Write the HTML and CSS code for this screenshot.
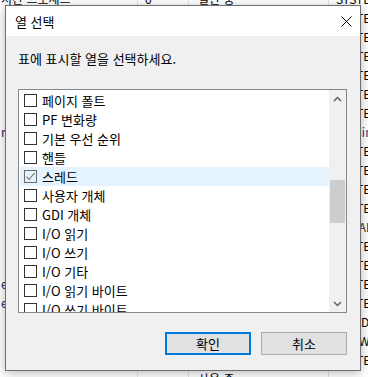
FILE: index.html
```html
<!DOCTYPE html>
<html lang="ko">
	<head>
		<meta charset="utf-8">
		<title>열 선택</title>
		<link rel="stylesheet" href="styles.css">
	</head>
	<body>
		<div class="table">
			<div class="row"><span class="c1">시간 프로세스</span><span class="c2">0</span><span class="c3">일반 중</span><span class="c4">SYSTEM</span></div>
			<div class="row"><span class="c1"></span><span class="c2"></span><span class="c3"></span><span class="c4">SYSTEM</span></div>
			<div class="row"><span class="c1"></span><span class="c2"></span><span class="c3"></span><span class="c4">SYSTEM</span></div>
			<div class="row"><span class="c1"></span><span class="c2"></span><span class="c3"></span><span class="c4">SYSTEM</span></div>
			<div class="row"><span class="c1"></span><span class="c2"></span><span class="c3"></span><span class="c4">SYSTEM</span></div>
			<div class="row"><span class="c1"></span><span class="c2"></span><span class="c3"></span><span class="c4">SYSTEM</span></div>
			<div class="row"><span class="c1"></span><span class="c2"></span><span class="c3"></span><span class="c4">SYSTEM</span></div>
			<div class="row"><span class="c1 lead">ra</span><span class="c2"></span><span class="c3"></span><span class="c4 user">Admin</span></div>
			<div class="row"><span class="c1"></span><span class="c2"></span><span class="c3"></span><span class="c4">SYSTEM</span></div>
			<div class="row"><span class="c1"></span><span class="c2"></span><span class="c3"></span><span class="c4">SYSTEM</span></div>
			<div class="row"><span class="c1"></span><span class="c2"></span><span class="c3"></span><span class="c4">SYSTEM</span></div>
			<div class="row"><span class="c1"></span><span class="c2"></span><span class="c3"></span><span class="c4">SYSTEM</span></div>
			<div class="row"><span class="c1"></span><span class="c2"></span><span class="c3"></span><span class="c4 svc">LOCAL SERVICE</span></div>
			<div class="row"><span class="c1"></span><span class="c2"></span><span class="c3"></span><span class="c4">SYSTEM</span></div>
			<div class="row"><span class="c1"></span><span class="c2"></span><span class="c3"></span><span class="c4">SYSTEM</span></div>
			<div class="row"><span class="c1 lead">e</span><span class="c2"></span><span class="c3"></span><span class="c4">SYSTEM</span></div>
			<div class="row"><span class="c1 lead">e:</span><span class="c2"></span><span class="c3"></span><span class="c4">SYSTEM</span></div>
			<div class="row"><span class="c1"></span><span class="c2"></span><span class="c3"></span><span class="c4">UMFD-0</span></div>
			<div class="row"><span class="c1"></span><span class="c2"></span><span class="c3"></span><span class="c4">NETWORK SERVICE</span></div>
			<div class="row"><span class="c1"></span><span class="c2"></span><span class="c3"></span><span class="c4">SYSTEM</span></div>
			<div class="row"><span class="c1"></span><span class="c2"></span><span class="c3">사용 중</span><span class="c4"></span></div>
		</div>

		<div class="dialog">
			<div class="titlebar">
				<span class="title">열 선택</span>
				<svg class="close" width="11" height="11" viewBox="0 0 11 11">
					<path d="M0.5 0.5 L10.5 10.5 M10.5 0.5 L0.5 10.5" stroke="#000" stroke-width="1" fill="none"/>
				</svg>
			</div>
			<div class="body">
				<p class="prompt">표에 표시할 열을 선택하세요.</p>
				<div class="listbox">
					<div class="items">
						<div class="item"><span class="box"></span>페이지 폴트</div>
						<div class="item"><span class="box"></span>PF 변화량</div>
						<div class="item"><span class="box"></span>기본 우선 순위</div>
						<div class="item"><span class="box"></span>핸들</div>
						<div class="item sel"><span class="box">
							<svg width="11" height="11" viewBox="0 0 11 11"><path d="M1.5 5.5 L4 8.5 L9.5 2" stroke="#6a6a6a" stroke-width="1.1" fill="none"/></svg>
						</span>스레드</div>
						<div class="item"><span class="box"></span>사용자 개체</div>
						<div class="item"><span class="box"></span>GDI 개체</div>
						<div class="item"><span class="box"></span>I/O 읽기</div>
						<div class="item"><span class="box"></span>I/O 쓰기</div>
						<div class="item"><span class="box"></span>I/O 기타</div>
						<div class="item"><span class="box"></span>I/O 읽기 바이트</div>
						<div class="item"><span class="box"></span>I/O 쓰기 바이트</div>
					</div>
					<div class="scrollbar">
						<div class="arrow">
							<svg width="9" height="6" viewBox="0 0 9 6"><path d="M1 5 L4.5 1.5 L8 5" stroke="#606060" stroke-width="1.5" fill="none"/></svg>
						</div>
						<div class="track"><div class="thumb"></div></div>
						<div class="arrow">
							<svg width="9" height="6" viewBox="0 0 9 6"><path d="M1 1 L4.5 4.5 L8 1" stroke="#606060" stroke-width="1.5" fill="none"/></svg>
						</div>
					</div>
				</div>
				<div class="buttons">
					<button class="btn default">확인</button>
					<button class="btn">취소</button>
				</div>
			</div>
		</div>
	</body>
</html>
```
FILE: styles.css
```css
html, body {
	margin: 0;
}
body {
	width: 368px;
	height: 377px;
	overflow: hidden;
	background: #fff;
	font-family: "Noto Sans CJK KR", "Noto Sans", sans-serif;
	font-size: 13px;
	color: #000;
}

/* task list behind the dialog */
.table {
	margin-top: -11px;
	font-size: 12px;
}
.row {
	display: grid;
	grid-template-columns: 137px 51px 140px 1fr;
	height: 19px;
	line-height: 19px;
	white-space: nowrap;
}
.row span {
	overflow: hidden;
}
.c1 {
	padding-left: 1px;
}
.c2 {
	border-left: 1px solid #e5e5e5;
	padding-left: 7px;
}
.c3 {
	border-left: 1px solid #e5e5e5;
	padding-left: 9px;
}
.c4 {
	border-left: 1px solid #e5e5e5;
	padding-left: 7px;
}
.lead {
	color: #1a2a6a;
}
.user {
	color: #3a2a7a;
}
.svc {
	color: #4a2a1a;
}

/* dialog */
.dialog {
	position: absolute;
	top: 5px;
	left: 5px;
	width: 354px;
	height: 364px;
	border: 1px solid #6e6e6e;
	background: #f0f0f0;
	box-shadow: 0 2px 10px rgba(0, 0, 0, 0.28);
	display: flex;
	flex-direction: column;
}
.titlebar {
	height: 30px;
	flex: none;
	background: #fff;
	display: flex;
	align-items: center;
	justify-content: space-between;
	padding: 0 8px 0 9px;
}
.title {
	line-height: 17px;
	margin-top: 1px;
}
.close {
	display: block;
}
.body {
	padding: 14px 13px 0 12px;
}
.prompt {
	margin: 0;
	line-height: 17px;
}

.listbox {
	margin-top: 22px;
	height: 222px;
	border: 1px solid #828790;
	background: #fff;
	display: flex;
}
.items {
	flex: 1;
	overflow: hidden;
	padding: 1px 0 0 1px;
}
.item {
	height: 19px;
	display: flex;
	align-items: center;
	gap: 5px;
	padding-left: 4px;
	white-space: nowrap;
}
.item.sel {
	background: #e5f3ff;
}
.box {
	width: 11px;
	height: 11px;
	flex: none;
	border: 1px solid #333;
	background: #fff;
	display: flex;
}
.sel .box {
	background: transparent;
	border-color: #6a6a6a;
}

.scrollbar {
	width: 17px;
	flex: none;
	background: #f0f0f0;
	display: flex;
	flex-direction: column;
}
.arrow {
	height: 17px;
	display: flex;
	align-items: center;
	justify-content: center;
}
.track {
	flex: 1;
}
.thumb {
	margin: 73px 1px 0;
	height: 43px;
	background: #cdcdcd;
}

.buttons {
	margin-top: 19px;
	display: flex;
	justify-content: flex-end;
	gap: 10px;
}
.btn {
	width: 86px;
	height: 23px;
	box-sizing: border-box;
	padding: 0;
	background: #e1e1e1;
	border: 1px solid #adadad;
	font-family: inherit;
	font-size: 13px;
	color: #000;
}
.btn.default {
	border: 2px solid #0078d7;
}
```
